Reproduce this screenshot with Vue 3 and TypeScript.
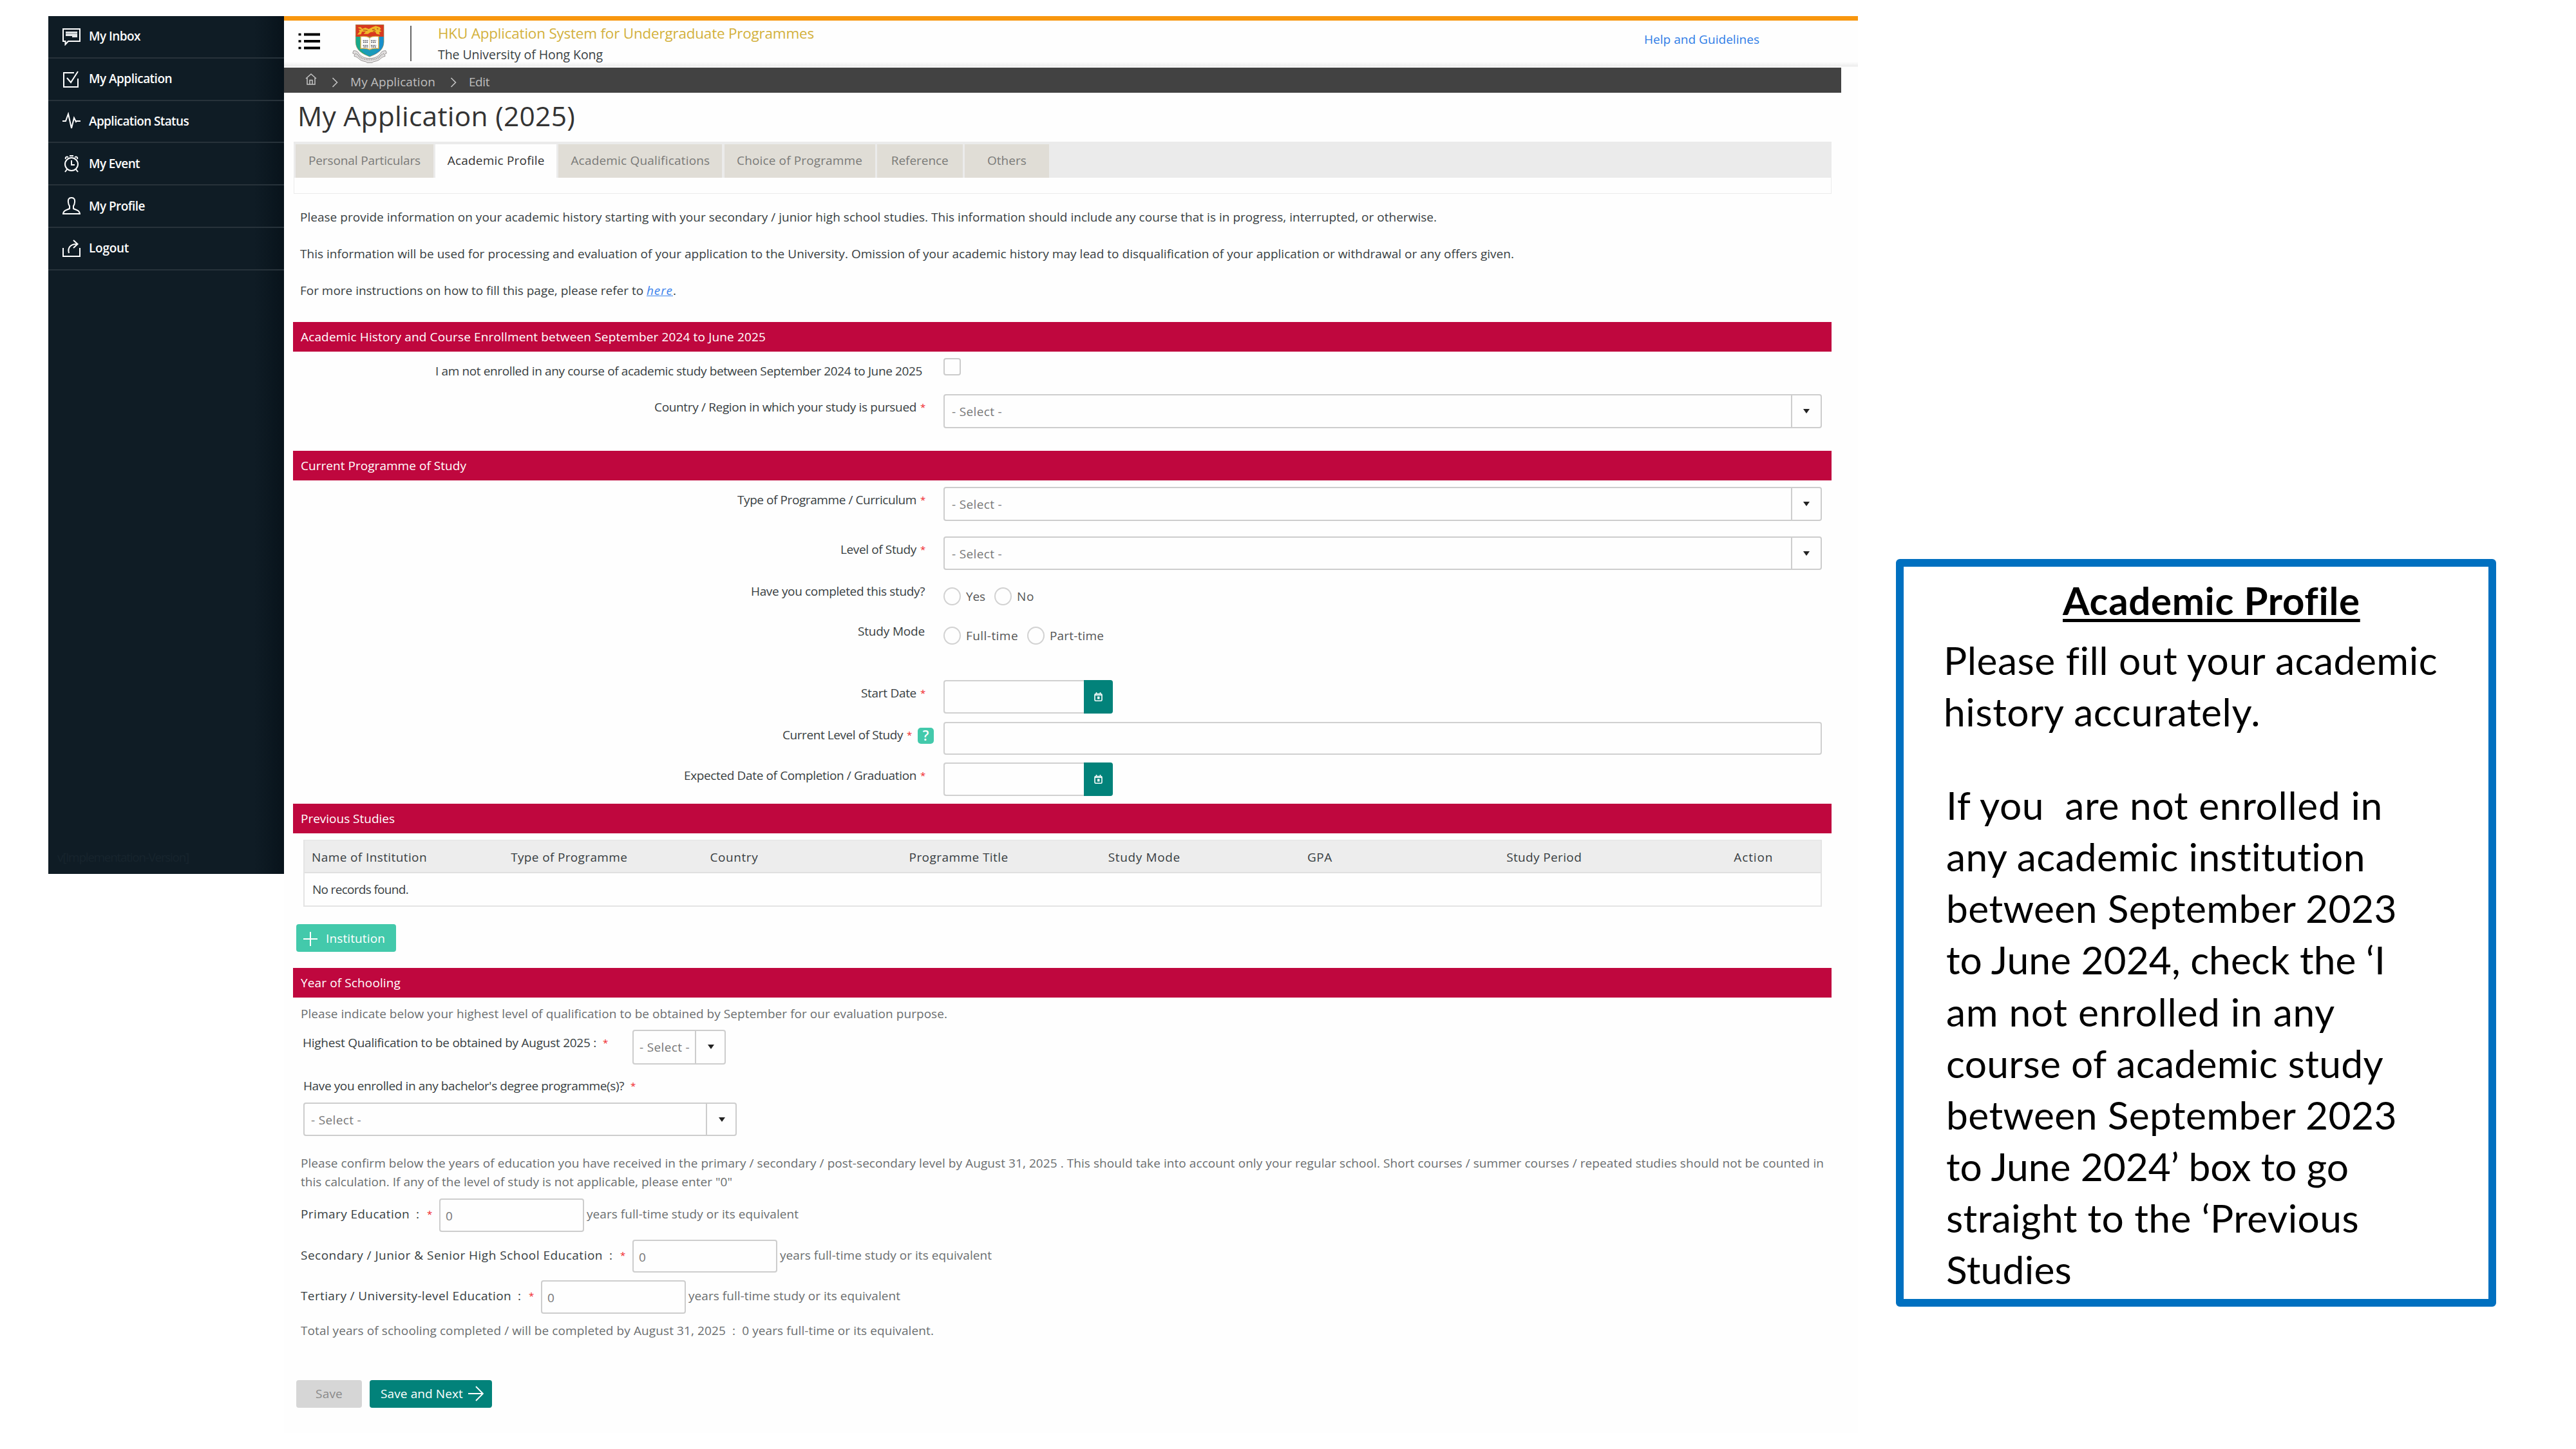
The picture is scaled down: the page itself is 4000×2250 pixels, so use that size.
<script setup lang="ts">
import type { Directive } from 'vue'

interface Tab { label: string; width: number; text: number; active?: boolean }
interface Column { label: string; text: number }
interface SchoolRow { label: string; width: number; top: number; height: number }
interface NoteLine { text: string; width: number }

// Tracks a text run so that it spans the given measure in pixels.
const vFit: Directive<HTMLElement, number> = {
  mounted(el, { value }) {
    const count = (el.textContent ?? '').length
    const natural = el.getBoundingClientRect().width
    if (count > 0) el.style.letterSpacing = `${(value - natural) / count}px`
  },
}

const menu = [
  { label: 'My Inbox', width: 80, icon: 'inbox' },
  { label: 'My Application', width: 129, icon: 'check' },
  { label: 'Application Status', width: 155, icon: 'pulse' },
  { label: 'My Event', width: 79, icon: 'clock' },
  { label: 'My Profile', width: 87, icon: 'user' },
  { label: 'Logout', width: 62, icon: 'logout' },
]

const tabs: Tab[] = [
  { label: 'Personal Particulars', width: 214, text: 174 },
  { label: 'Academic Profile', width: 188, text: 151, active: true },
  { label: 'Academic Qualifications', width: 254, text: 216 },
  { label: 'Choice of Programme', width: 234, text: 195 },
  { label: 'Reference', width: 133, text: 89 },
  { label: 'Others', width: 131, text: 61 },
]

const columns: Column[] = [
  { label: 'Name of Institution', text: 179 },
  { label: 'Type of Programme', text: 181 },
  { label: 'Country', text: 75 },
  { label: 'Programme Title', text: 154 },
  { label: 'Study Mode', text: 112 },
  { label: 'GPA', text: 39 },
  { label: 'Study Period', text: 117 },
  { label: 'Action', text: 61 },
]

const schooling: SchoolRow[] = [
  { label: 'Primary Education', width: 169, top: 11, height: 52 },
  { label: 'Secondary / Junior & Senior High School Education', width: 469, top: 12, height: 51 },
  { label: 'Tertiary / University-level Education', width: 327, top: 12, height: 52 },
]

const noteIntro: NoteLine[] = [
  { text: 'Please fill out your academic', width: 766 },
  { text: 'history accurately.', width: 492 },
]
const noteBody: NoteLine[] = [
  { text: 'If you\u00a0 are not enrolled in', width: 678 },
  { text: 'any academic institution', width: 653 },
  { text: 'between September 2023', width: 700 },
  { text: 'to June 2024, check the ‘I', width: 682 },
  { text: 'am not enrolled in any', width: 604 },
  { text: 'course of academic study', width: 679 },
  { text: 'between September 2023', width: 700 },
  { text: 'to June 2024’ box to go', width: 625 },
  { text: 'straight to the ‘Previous', width: 641 },
  { text: 'Studies', width: 195 },
]
</script>

<template>
  <div class="slide">
    <nav class="sidebar">
      <div v-for="item in menu" :key="item.label" class="item">
        <svg class="ico" viewBox="0 0 28 28" fill="none" stroke="#fff" stroke-width="2">
          <template v-if="item.icon === 'inbox'">
            <path d="M1 2H27V21H9L4.500 26V21H1Z" />
            <path d="M5 6H23V15H15V13H5Z" fill="#e4e7e9" stroke="none" />
            <path d="M5 9H23" stroke="#7b8388" stroke-width="1" />
          </template>
          <template v-else-if="item.icon === 'check'">
            <path d="M18 4H2V26H24V13" /><path d="M7 12L13 19L24 2" />
          </template>
          <path v-else-if="item.icon === 'pulse'" d="M0 14H5L9 3L14 25L18 9L21 15L22 14H28" />
          <template v-else-if="item.icon === 'clock'">
            <circle cx="14" cy="15" r="10" /><path d="M14 9V16H19M5 7C4 4 6 3 9 4M23 7C24 4 22 3 19 4M7 23L4 27M21 23L24 27M11 2H17" />
          </template>
          <path v-else-if="item.icon === 'user'" d="M14 1C9.500 1 8.500 4 9 8C9.300 11 10 13 11 14V18C7 20 2 20 1 26H27C26 20 21 20 17 18V14C18 13 18.700 11 19 8C19.500 4 18.500 1 14 1Z" />
          <template v-else>
            <path d="M1 13V26H27V13" /><path d="M10 21C8 14 11 7 22 7M17 1L23.500 7L17 13" />
          </template>
        </svg>
        <span v-fit="item.width">{{ item.label }}</span>
      </div>
      <div class="version"><span v-fit="204">v[Implementation-Version]</span></div>
    </nav>

    <main class="page">
      <header class="top">
        <svg class="burger" viewBox="0 0 34 28">
          <path d="M9 3.500H34M9 14H34M9 24.500H34" stroke="#000" stroke-width="4" />
          <path d="M0.500 3.500H4.500M0.500 14H4.500M0.500 24.500H4.500" stroke="#000" stroke-width="3.500" />
        </svg>
        <svg class="crest" viewBox="0 0 160 180">
          <path d="M5 122C18 122 26 126 30 136C42 150 58 158 80 158C102 158 118 150 130 136C134 126 142 122 155 122L159 134L150 138L152 148C138 150 134 158 122 166C108 174 98 170 92 178H68C62 170 52 174 38 166C26 158 22 150 8 148L10 138L1 134Z" fill="#e3e1e1" stroke="#9b9796" stroke-width="3" />
          <path d="M14 136C26 138 30 152 46 158C64 166 96 166 114 158C130 152 134 138 146 136" fill="none" stroke="#a09c9b" stroke-width="7" stroke-dasharray="4 4" />
          <path d="M15 50H80V150C44 136 16 120 15 82Z" fill="#18a98b" />
          <path d="M80 50H146V82C145 120 116 136 80 150Z" fill="#1a8fcb" />
          <path d="M36 108L80 118L124 108C116 128 98 140 80 148C62 140 44 128 36 108Z" fill="#1b9bb9" />
          <path d="M15 1H146V57H15Z" fill="#d8391f" />
          <path d="M24 14L38 12L46 20L60 15L76 21L94 12L108 7L126 12L133 20L126 26L136 32L124 36L128 47L112 44L106 34L84 36L72 44H52L62 33L44 34L40 46L22 47L34 33L28 26L42 24Z" fill="#efb92c" />
          <path d="M50 26L70 28M92 24L104 22M114 18L120 22M96 32L108 28" stroke="#b8541c" stroke-width="4" />
          <path d="M38 56C54 54 72 56 80 62C88 56 106 54 122 56V112C104 110 88 112 80 118C72 112 56 110 38 112Z" fill="#fff" stroke="#d9a53a" stroke-width="4" />
          <path d="M80 62V114" stroke="#c79a42" stroke-width="2" />
          <path d="M49 75H74M50 83H73M49 98H74M52 105H72M86 75H111M87 83H110M86 98H111M88 105H109" stroke="#4e4e55" stroke-width="5" stroke-dasharray="5 3" />
          <path d="M15 1V82C16 120 44 136 80 150C116 136 145 120 146 82V1Z" fill="none" stroke="#8f8243" stroke-width="2" />
        </svg>
        <div class="rule"></div>
        <div class="brand">
          <div class="system"><span v-fit="584">HKU Application System for Undergraduate Programmes</span></div>
          <div class="uni"><span v-fit="256">The University of Hong Kong</span></div>
        </div>
        <a class="help"><span v-fit="179">Help and Guidelines</span></a>
      </header>

      <div class="crumbs">
        <svg class="home" viewBox="0 0 18 18" fill="none" stroke="#c4c4c4" stroke-width="1.500">
          <path d="M1 8L9 1L17 8M3 7V17H15V7M7 17V10.500H11V17" />
        </svg>
        <svg class="chev" viewBox="0 0 10 16" fill="none" stroke="#c4c4c4" stroke-width="1.600"><path d="M1.500 1L8.500 8L1.500 15" /></svg>
        <span v-fit="132">My Application</span>
        <svg class="chev" viewBox="0 0 10 16" fill="none" stroke="#c4c4c4" stroke-width="1.600"><path d="M1.500 1L8.500 8L1.500 15" /></svg>
        <span v-fit="32">Edit</span>
      </div>

      <h1><span v-fit="431">My Application (2025)</span></h1>

      <div class="tabs">
        <div class="strip">
          <div v-for="tab in tabs" :key="tab.label" class="tab" :class="{ active: tab.active }" :style="{ width: tab.width + 'px' }">
            <span v-fit="tab.text">{{ tab.label }}</span>
          </div>
        </div>
      </div>

      <div class="intro">
        <p><span v-fit="1765">Please provide information on your academic history starting with your secondary / junior high school studies. This information should include any course that is in progress, interrupted, or otherwise.</span></p>
        <p><span v-fit="1885">This information will be used for processing and evaluation of your application to the University. Omission of your academic history may lead to disqualification of your application or withdrawal or any offers given.</span></p>
        <p><span v-fit="538">For more instructions on how to fill this page, please refer to&nbsp;</span><a v-fit="41">here</a>.</p>
      </div>

      <h2 class="bar"><span v-fit="722">Academic History and Course Enrollment between September 2024 to June 2025</span></h2>
      <div class="row enrol">
        <div class="label"><span v-fit="756">I am not enrolled in any course of academic study between September 2024 to June 2025</span></div>
        <div class="box"></div>
      </div>
      <div class="row country">
        <div class="label"><span v-fit="407">Country / Region in which your study is pursued</span><i class="req">*</i></div>
        <div class="select"><span v-fit="78">- Select -</span><b class="arrow"></b></div>
      </div>

      <h2 class="bar"><span v-fit="257">Current Programme of Study</span></h2>
      <div class="row type">
        <div class="label"><span v-fit="278">Type of Programme / Curriculum</span><i class="req">*</i></div>
        <div class="select"><span v-fit="78">- Select -</span><b class="arrow"></b></div>
      </div>
      <div class="row level">
        <div class="label"><span v-fit="118">Level of Study</span><i class="req">*</i></div>
        <div class="select"><span v-fit="78">- Select -</span><b class="arrow"></b></div>
      </div>
      <div class="row done">
        <div class="label"><span v-fit="270">Have you completed this study?</span></div>
        <div class="radios">
          <u></u><span v-fit="30">Yes</span><u></u><span v-fit="27">No</span>
        </div>
      </div>
      <div class="row mode">
        <div class="label"><span v-fit="104">Study Mode</span></div>
        <div class="radios">
          <u></u><span v-fit="81">Full-time</span><u></u><span v-fit="84">Part-time</span>
        </div>
      </div>
      <div class="row start">
        <div class="label"><span v-fit="86">Start Date</span><i class="req">*</i></div>
        <div class="date">
          <div class="cal"><svg viewBox="0 0 13 14" fill="none" stroke="#fff" stroke-width="1.600"><rect x="1" y="2.500" width="11" height="10.700" rx="1.500" /><path d="M1 4.300H12M3.500 0V3M9.500 0V3" /><path d="M5 6.500H8.500V10.500H5Z" fill="#fff" stroke="none" /></svg></div>
        </div>
      </div>
      <div class="row current">
        <div class="label"><span v-fit="187">Current Level of Study</span><i class="req">*</i><em class="tip">?</em></div>
        <div class="field"></div>
      </div>
      <div class="row expected">
        <div class="label"><span v-fit="361">Expected Date of Completion / Graduation</span><i class="req">*</i></div>
        <div class="date">
          <div class="cal"><svg viewBox="0 0 13 14" fill="none" stroke="#fff" stroke-width="1.600"><rect x="1" y="2.500" width="11" height="10.700" rx="1.500" /><path d="M1 4.300H12M3.500 0V3M9.500 0V3" /><path d="M5 6.500H8.500V10.500H5Z" fill="#fff" stroke="none" /></svg></div>
        </div>
      </div>

      <h2 class="bar"><span v-fit="146">Previous Studies</span></h2>
      <div class="table">
        <div class="thead">
          <div v-for="col in columns" :key="col.label" class="th"><span v-fit="col.text">{{ col.label }}</span></div>
        </div>
        <div class="empty"><span v-fit="149">No records found.</span></div>
      </div>
      <button class="add">
        <svg viewBox="0 0 24 24" stroke="#fff" stroke-width="2"><path d="M12 1V23M1 12H23" /></svg>
        <span v-fit="92">Institution</span>
      </button>

      <h2 class="bar"><span v-fit="155">Year of Schooling</span></h2>
      <p class="soft hint"><span v-fit="1004">Please indicate below your highest level of qualification to be obtained by September for our evaluation purpose.</span></p>
      <div class="highest">
        <span v-fit="456">Highest Qualification to be obtained by August 2025 :</span><i class="req">*</i>
        <div class="select small"><span v-fit="78">- Select -</span><b class="arrow"></b></div>
      </div>
      <div class="bachelor"><span v-fit="498">Have you enrolled in any bachelor's degree programme(s)?</span><i class="req">*</i></div>
      <div class="select medium"><span v-fit="78">- Select -</span><b class="arrow"></b></div>

      <p class="soft confirm">
        <span v-fit="2365">Please confirm below the years of education you have received in the primary / secondary / post-secondary level by August 31, 2025 . This should take into account only your regular school. Short courses / summer courses / repeated studies should not be counted in</span><br />
        <span v-fit="670">this calculation. If any of the level of study is not applicable, please enter "0"</span>
      </p>

      <div v-for="row in schooling" :key="row.label" class="years" :style="{ marginTop: row.top + 'px', height: row.height + 'px' }">
        <span v-fit="row.width">{{ row.label }}</span><span class="colon">:</span><i class="req">*</i>
        <div class="num">0</div>
        <span v-fit="329" class="soft unit">years full-time study or its equivalent</span>
      </div>
      <p class="soft total"><span v-fit="983">Total years of schooling completed / will be completed by August 31, 2025 &nbsp;:&nbsp; 0 years full-time or its equivalent.</span></p>

      <div class="actions">
        <button class="save"><span v-fit="42">Save</span></button>
        <button class="next"><span v-fit="128">Save and Next</span>
          <svg viewBox="0 0 24 24" fill="none" stroke="#fff" stroke-width="1.900"><path d="M0 12H22M12 1L23 12L12 23" /></svg>
        </button>
      </div>
    </main>

    <aside class="note">
      <h3><span v-fit="461">Academic Profile</span></h3>
      <div class="para">
        <div v-for="line in noteIntro" :key="line.text"><span v-fit="line.width">{{ line.text }}</span></div>
      </div>
      <div class="para body">
        <div v-for="(line, i) in noteBody" :key="i"><span v-fit="line.width">{{ line.text }}</span></div>
      </div>
    </aside>
  </div>
</template>

<style>
body { background: #fff; }
</style>

<style scoped>
* { box-sizing: border-box; margin: 0; padding: 0; }
.slide {
  display: flex; align-items: flex-start; width: 4000px; height: 2250px; overflow: hidden;
  font-family: "Open Sans", "Noto Sans", sans-serif; font-size: 19px; line-height: 25px; color: #383e42;
}
span { display: inline-block; white-space: pre; }
svg { display: block; flex: none; }
i, em { font-style: normal; }
button { border: 0; font: inherit; display: flex; align-items: center; }

.sidebar {
  flex: none; display: flex; flex-direction: column; width: 366px; height: 1332px; margin: 25px 0 0 75px;
  background: linear-gradient(90deg, #0f1c25 0, #0f1c25 320px, #08131b 366px); color: #fff; font-weight: 600;
}
.item { display: flex; align-items: center; height: 65.8px; padding-left: 22px; border-bottom: 2px solid #27323a; }
.item span { margin-left: 13px; }
.ico { width: 28px; height: 28px; }
.version { margin: auto 0 13px 14px; font-weight: 400; color: #17242d; }

.page { flex: none; width: 2444px; height: 2200px; margin-top: 25px; border-top: 7.500px solid #f8970f; background: #fefefe; }
.top { display: flex; height: 72.500px; background: linear-gradient(#fefefe 64px, #ececec 71px, #fefefe 72px); }
.burger { width: 34px; height: 28px; margin: 17.500px 0 0 22px; }
.crest { width: 54px; height: 60px; margin: 5.500px 0 0 50px; }
.rule { width: 2px; height: 55px; margin: 7.500px 0 0 36px; background: #666; }
.brand { width: 590px; margin: 4px 0 0 41px; }
.system { height: 31px; line-height: 31px; font-size: 22.500px; color: #d3b13c; }
.uni { height: 30px; line-height: 35px; font-size: 19.500px; }
.help { margin: 17px 0 0 1283px; color: #2f7de6; }

.crumbs { display: flex; width: 2418px; height: 39px; padding-left: 33px; background: #424242; color: #bebebe; line-height: 44px; }
.home { width: 18px; height: 18px; margin-top: 9px; }
.chev { width: 10px; height: 16px; margin: 15px 19px 0 23px; }

h1 { height: 50px; margin: 11px 0 0 21px; line-height: 50px; font-size: 42.500px; font-weight: 400; color: #333; }
.tabs { width: 2388px; height: 81px; margin: 15px 0 0 15px; border: 1.500px solid #ebebeb; border-top: 0; }
.strip { display: flex; gap: 3.200px; height: 56px; padding: 4px 0 0 2px; background: #ebebeb; }
.tab { display: flex; align-items: center; justify-content: center; height: 52px; background: #e0ddd6; color: #7a7a78; }
.tab.active { background: #fefefe; color: #333; }

.intro { height: 199px; padding: 24px 0 0 25px; }
.intro p { height: 26px; margin-bottom: 31px; }
.intro a { display: inline-block; font-style: italic; text-decoration: underline; color: #3b82ec; }

.bar { width: 2389px; height: 46px; margin-left: 14px; padding-left: 12px; line-height: 46px; background: #bf073e; color: #fff; font-size: 19px; font-weight: 400; }
.row { display: flex; align-items: flex-start; margin-left: 14px; }
.label { display: flex; justify-content: flex-end; width: 981px; margin: 8px 29px 0 0; }
.req { width: 7px; margin-left: 6px; font-size: 15px; color: #f0282d; }
.select {
  display: flex; justify-content: space-between; width: 1364px; height: 53px; padding-left: 11px;
  border: 2px solid #cdcdcd; border-radius: 4px; line-height: 50px; color: #777;
}
.arrow { display: block; position: relative; width: 46px; border-left: 2px solid #cdcdcd; }
.arrow::after { content: ""; position: absolute; left: 17px; top: 21px; border: solid transparent; border-width: 7px 5.500px 0; border-top-color: #222; }
.field { width: 1364px; height: 51px; border: 2px solid #d0d0d0; border-radius: 4px; }
.enrol { height: 66px; }
.enrol .label { margin: 18px 33px 0 0; width: 977px; }
.box { width: 27px; height: 27px; margin-top: 10px; border: 2px solid #cbcbcb; border-radius: 4px; }
.country { height: 88px; }
.type { height: 87.500px; padding-top: 10px; }
.level { height: 72.500px; }
.level .select { height: 52px; }
.done { height: 62px; }
.done .label, .mode .label { margin-top: 0; }
.mode { height: 88px; }
.radios { display: flex; margin-top: 6px; line-height: 29px; color: #555; }
.mode .radios { margin-top: 5px; }
.radios u { width: 27px; height: 28px; margin-right: 8px; border: 2px solid #d2d2d2; border-radius: 50%; }
.radios span { margin-right: 14px; }
.start { height: 65.500px; }
.current { height: 62.500px; }
.tip { width: 25px; height: 25px; margin: 1px -14px 0 10px; border-radius: 5px; background: #43c9ab; color: #fff; font-size: 21px; line-height: 25px; font-weight: 600; text-align: center; }
.expected { height: 64px; }
.date { display: flex; justify-content: flex-end; width: 263px; height: 52px; border: 2px solid #d0d0d0; border-right: 0; border-radius: 4px; }
.cal { display: flex; align-items: center; justify-content: center; width: 45px; height: 52px; margin-top: -2px; background: #02827a; border-radius: 0 4px 4px 0; }
.cal svg { width: 13px; height: 14px; }

.table { width: 2358px; height: 104px; margin: 10px 0 0 30px; border: 2px solid #e4e4e4; }
.thead { display: flex; height: 51px; background: #ededed; border-bottom: 2px solid #e0e0e0; line-height: 52px; margin-top: -1px; }
.th { flex: none; width: 309.200px; padding-left: 11px; }
.th:last-child { width: 180px; padding-left: 55px; }
.empty { padding-left: 12px; line-height: 50px; }
.add { width: 155px; height: 43px; margin: 27px 0 25px 19px; padding: 5px 0 0 10px; border-radius: 4px; background: #43c9ab; color: #fff; }
.add svg { width: 24px; height: 24px; margin-top: -2px; }
.add span { margin-left: 12px; margin-top: -3px; }

.soft { color: #6b6e70; }
.hint { height: 50px; padding-left: 26px; line-height: 50px; }
.highest { display: flex; height: 75px; margin-left: 29px; padding-top: 8px; }
.highest .req, .bachelor .req { margin-left: 10px; }
.small { width: 145px; height: 54px; margin: -8px 0 0 39px; line-height: 51px; padding-left: 9px; }
.small .arrow::after, .medium .arrow::after { left: 18px; }
.bachelor { display: flex; height: 38px; margin-left: 30px; }
.medium { width: 673px; height: 52px; margin-left: 30px; padding-left: 10px; }
.confirm { height: 86px; padding: 28px 0 0 26px; line-height: 29px; }
.years { display: flex; margin-left: 26px; line-height: 48px; }
.years .colon { width: 5px; margin-left: 10px; }
.years .req { margin-left: 12px; }
.num { width: 225px; margin-left: 12px; padding-left: 8px; border: 2px solid #cdcdcd; border-radius: 4px; color: #777; line-height: 50px; }
.unit { margin-left: 4px; }
.total { height: 103px; padding: 14px 0 0 26px; }
.actions { display: flex; gap: 12px; margin-left: 19px; }
.save { justify-content: center; width: 102px; height: 43px; border-radius: 4px; background: #d6d6d6; color: #8a8a8a; }
.next { width: 190px; height: 43px; padding-left: 17px; border-radius: 4px; background: #02827a; color: #fff; }
.next svg { width: 24px; height: 24px; margin-left: 8px; }

.note {
  flex: none; width: 932px; height: 1161px; margin: 868px 0 0 59px; padding-top: 12px; border: 12px solid #0070c0; border-radius: 6px;
  background: #fff; color: #000; font-family: Lato, "Open Sans", sans-serif; font-size: 60.500px; line-height: 80.100px;
}
.note h3 { height: 80px; margin-left: 247px; font-size: 60px; font-weight: 700; }
.note h3 span { text-decoration: underline; text-decoration-thickness: 5px; text-underline-offset: 6px; text-decoration-skip-ink: none; }
.para { margin: 13px 0 0 62px; }
.body { margin: 65px 0 0 66px; }
</style>
